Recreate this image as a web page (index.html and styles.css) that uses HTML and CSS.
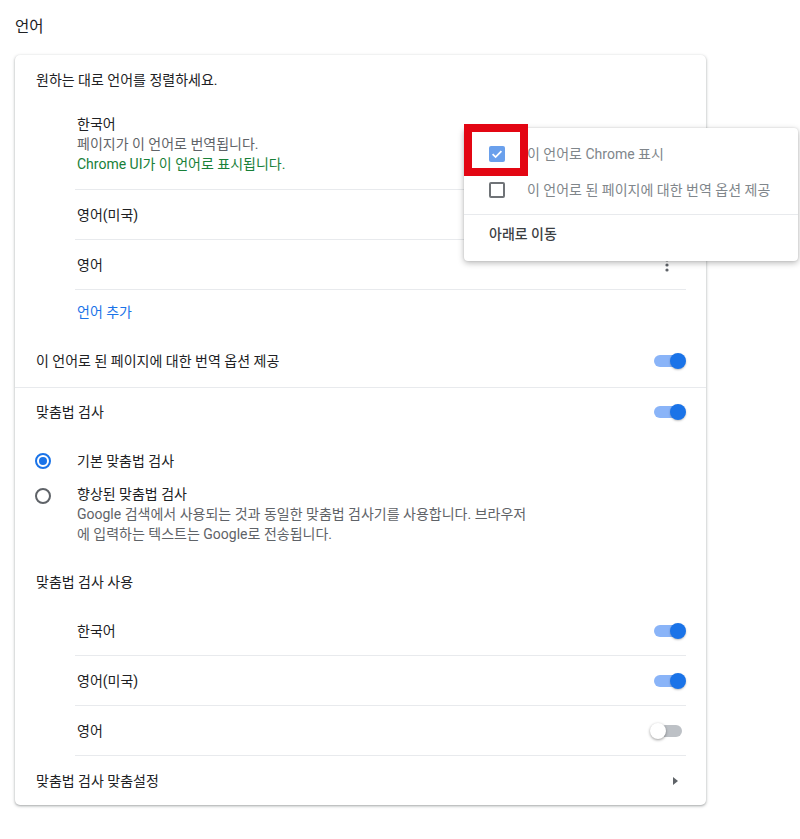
FILE: index.html
```html
<!DOCTYPE html>
<html lang="ko">
<head>
<meta charset="utf-8">
<title>언어</title>
<link rel="stylesheet" href="styles.css">
</head>
<body>
<div class="page">
  <h1 class="title">언어</h1>
  <div class="card">
    <div class="row head">원하는 대로 언어를 정렬하세요.</div>
    <div class="sublist">
      <div class="item multi">
        <div class="item-text">
          <div>한국어</div>
          <div class="sec">페이지가 이 언어로 번역됩니다.</div>
          <div class="green">Chrome UI가 이 언어로 표시됩니다.</div>
        </div>
        <svg class="kebab" viewBox="0 0 20 20"><circle cx="10" cy="5" r="1.6"/><circle cx="10" cy="10" r="1.6"/><circle cx="10" cy="15" r="1.6"/></svg>
      </div>
      <div class="item">
        <div class="item-text">영어(미국)</div>
        <svg class="kebab" viewBox="0 0 20 20"><circle cx="10" cy="5" r="1.6"/><circle cx="10" cy="10" r="1.6"/><circle cx="10" cy="15" r="1.6"/></svg>
      </div>
      <div class="item">
        <div class="item-text">영어</div>
        <svg class="kebab" viewBox="0 0 20 20"><circle cx="10" cy="5" r="1.6"/><circle cx="10" cy="10" r="1.6"/><circle cx="10" cy="15" r="1.6"/></svg>
      </div>
      <div class="item add">언어 추가</div>
    </div>
    <div class="row translate">
      <span>이 언어로 된 페이지에 대한 번역 옵션 제공</span>
      <span class="toggle on"><span class="track"></span><span class="knob"></span></span>
    </div>
    <div class="row spell">
      <span>맞춤법 검사</span>
      <span class="toggle on"><span class="track"></span><span class="knob"></span></span>
    </div>
    <div class="radios">
      <div class="radio-row first">
        <span class="radio checked"></span>
        <span class="radio-label">기본 맞춤법 검사</span>
      </div>
      <div class="radio-row second">
        <span class="radio"></span>
        <div class="radio-label">
          <div>향상된 맞춤법 검사</div>
          <div class="sec">Google 검색에서 사용되는 것과 동일한 맞춤법 검사기를 사용합니다. 브라우저<br>에 입력하는 텍스트는 Google로 전송됩니다.</div>
        </div>
      </div>
    </div>
    <div class="row use">맞춤법 검사 사용</div>
    <div class="sublist spell-list">
      <div class="item">
        <div class="item-text">한국어</div>
        <span class="toggle on"><span class="track"></span><span class="knob"></span></span>
      </div>
      <div class="item">
        <div class="item-text">영어(미국)</div>
        <span class="toggle on"><span class="track"></span><span class="knob"></span></span>
      </div>
      <div class="item">
        <div class="item-text">영어</div>
        <span class="toggle"><span class="track"></span><span class="knob"></span></span>
      </div>
    </div>
    <div class="row custom">
      <span>맞춤법 검사 맞춤설정</span>
      <span class="arrow"></span>
    </div>
  </div>

  <div class="menu">
    <div class="menu-item">
      <span class="cb checked"><svg viewBox="0 0 16 16"><path d="M3.6 8.2 6.6 11.1 12.4 5.2" fill="none" stroke="#fff" stroke-width="1.8"/></svg></span>
      <span class="menu-label">이 언어로 Chrome 표시</span>
    </div>
    <div class="menu-item">
      <span class="cb"></span>
      <span class="menu-label">이 언어로 된 페이지에 대한 번역 옵션 제공</span>
    </div>
    <div class="menu-sep"></div>
    <div class="menu-item move">아래로 이동</div>
  </div>
  <div class="annot"></div>
</div>
</body>
</html>
```

FILE: styles.css
```css
* { box-sizing: border-box; }

html, body {
  margin: 0;
  background: #fff;
}

body {
  font-family: Roboto, "Noto Sans CJK KR", sans-serif;
  font-size: 14px;
  line-height: 20px;
  color: #202124;
}

.page {
  position: relative;
  width: 800px;
  height: 839px;
}

.title {
  margin: 0;
  padding: 17px 0 0 15px;
  height: 55px;
  font-size: 15.5px;
  font-weight: 400;
  line-height: 20px;
  color: #202124;
}

.card {
  margin-left: 15px;
  width: 691px;
  background: #fff;
  border-radius: 5px;
  box-shadow: 0 1px 2px rgba(60, 64, 67, 0.3), 0 1px 3px 1px rgba(60, 64, 67, 0.15);
}

.row {
  display: flex;
  align-items: center;
  justify-content: space-between;
  padding: 0 20px 0 21px;
}

.head { height: 50px; }

.sublist {
  margin: 0 20px 0 60px;
}

.item {
  display: flex;
  align-items: center;
  justify-content: space-between;
  height: 50px;
  padding-left: 2px;
  border-bottom: 1px solid #e8eaed;
}

.item.multi {
  height: 85px;
  align-items: flex-start;
  padding-top: 9px;
}

.item.multi .kebab { margin-top: 22px; }

.item.add {
  height: 44px;
  border-bottom: none;
  color: #1a73e8;
}

.sec { color: #5f6368; }
.green { color: #188038; }

.kebab {
  width: 20px;
  height: 20px;
  margin-right: 9px;
  fill: #5f6368;
}

.translate {
  height: 54px;
  border-bottom: 1px solid #e8eaed;
}

.spell { height: 48px; }

.radios {
  padding: 5px 20px 13px 20px;
}

.radio-row {
  display: flex;
  align-items: flex-start;
}

.radio-row.first {
  height: 40px;
  align-items: center;
}

.radio-row.second {
  padding-top: 3px;
}

.radio {
  flex: none;
  width: 16px;
  height: 16px;
  margin-left: 0;
  margin-right: 26px;
  border: 2px solid #5f6368;
  border-radius: 50%;
  position: relative;
}

.radio-row.second .radio { margin-top: 4px; }

.radio.checked { border-color: #1a73e8; }

.radio.checked::after {
  content: "";
  position: absolute;
  left: 2px;
  top: 2px;
  width: 8px;
  height: 8px;
  border-radius: 50%;
  background: #1a73e8;
}

.use { height: 49px; }

.custom { height: 49px; }

.arrow {
  width: 0;
  height: 0;
  margin-right: 8px;
  border-left: 5px solid #5f6368;
  border-top: 4px solid transparent;
  border-bottom: 4px solid transparent;
}

/* toggle */
.toggle {
  position: relative;
  flex: none;
  width: 36px;
  height: 16px;
}

.toggle .track {
  position: absolute;
  left: 4px;
  right: 4px;
  top: 2px;
  height: 12px;
  border-radius: 6px;
  background: #bdc1c6;
}

.toggle .knob {
  position: absolute;
  left: 0;
  top: 0;
  width: 16px;
  height: 16px;
  border-radius: 50%;
  background: #fff;
  box-shadow: 0 1px 3px rgba(0, 0, 0, 0.4);
}

.toggle.on .track { background: #8ab4f8; }

.toggle.on .knob {
  left: auto;
  right: 0;
  background: #1a73e8;
  box-shadow: 0 1px 2px rgba(0, 0, 0, 0.25);
}

/* menu */
.menu {
  position: absolute;
  left: 464px;
  top: 128px;
  width: 334px;
  height: 133px;
  padding: 8px 0;
  background: #fff;
  border-radius: 4px;
  box-shadow: 0 2px 6px rgba(0, 0, 0, 0.28), 0 0 2px rgba(0, 0, 0, 0.12);
}

.menu-item {
  display: flex;
  align-items: center;
  height: 36px;
  padding-left: 25px;
  color: #80868b;
}

.cb {
  flex: none;
  width: 16px;
  height: 16px;
  margin-right: 22px;
  border: 2px solid #6f7377;
  border-radius: 2px;
}

.cb.checked {
  border: none;
  background: #6aa0ec;
}

.cb svg {
  display: block;
  width: 16px;
  height: 16px;
}

.menu-sep {
  height: 1px;
  margin-top: 6px;
  background: #e8eaed;
}

.menu-item.move {
  height: 37px;
  color: #3c4043;
  font-weight: 500;
}

.annot {
  position: absolute;
  left: 464px;
  top: 124px;
  width: 64px;
  height: 52px;
  border: 8px solid #e30613;
}
```
